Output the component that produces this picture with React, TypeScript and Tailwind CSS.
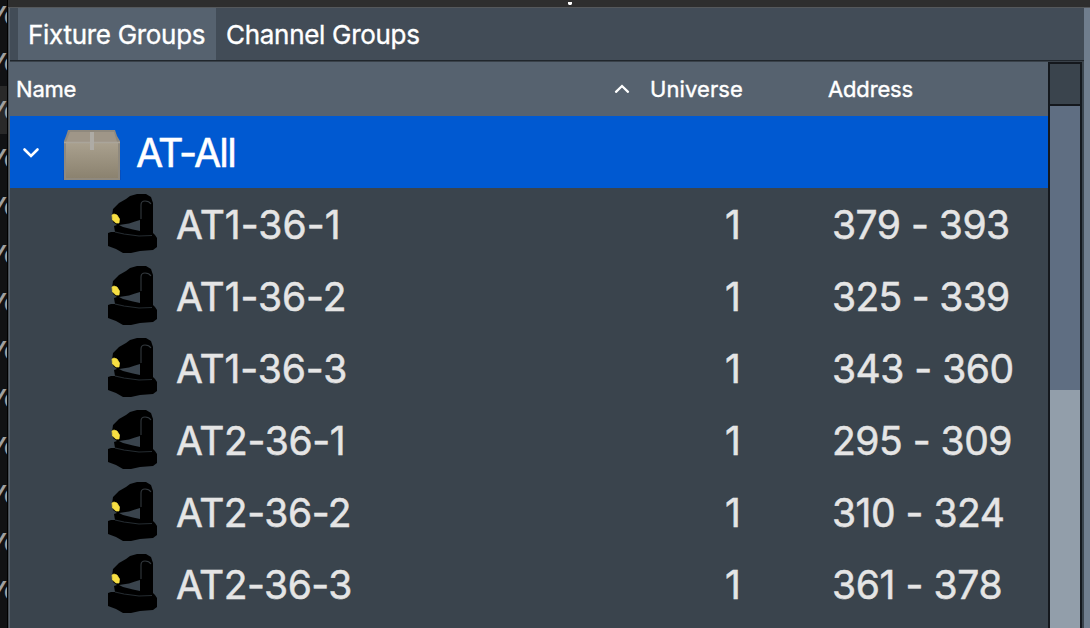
const fixtures = [
  { name: "AT1-36-1", address: "379 - 393", nameSpacing: "tracking-[0.05px]", addressSpacing: "tracking-[-0.5px]" },
  { name: "AT1-36-2", address: "325 - 339", nameSpacing: "tracking-[-0.05px]", addressSpacing: "tracking-[-0.7px]" },
  { name: "AT1-36-3", address: "343 - 360", nameSpacing: "tracking-[-0.1px]", addressSpacing: "tracking-[-0.5px]" },
  { name: "AT2-36-1", address: "295 - 309", nameSpacing: "tracking-[-0.35px]", addressSpacing: "tracking-[-0.5px]" },
  { name: "AT2-36-2", address: "310 - 324", nameSpacing: "tracking-[-0.45px]", addressSpacing: "tracking-[-0.5px]" },
  { name: "AT2-36-3", address: "361 - 378", nameSpacing: "tracking-[-0.5px]", addressSpacing: "tracking-[-0.4px]" },
];

function MovingHead() {
  return (
    <svg className="h-[72px] w-[70px] shrink-0" viewBox="0 0 70 72">
      <path d="M12 28 13 21 19 15 26 11 30 8 37 6H46L51 9 53 15V45L55 47 57 50V59L53 62 40 63 31 65H23L16 61 8 58V45L11 44H15L14 38 17 37 13 34Z" fill="#000" />
      <path d="M19 37 29 35.5 35 33.5 40 32V43L33 41.5 23 39Z" fill="#3a444d" />
      <path d="M41 31V17Q41 13 45 13T51 16" fill="none" stroke="#32383d" strokeWidth="1.1" />
      <path d="M15 44 24 46 39 48 52 47.5" fill="none" stroke="#242b30" strokeWidth="1.2" />
      <path d="M12 27 14 26 17 27 19.5 31 19 35H16L12.500 32Z" fill="#f7df43" stroke="#f7df43" strokeWidth=".7" />
    </svg>
  );
}

function Carton() {
  return (
    <svg className="h-[66px] w-[64px] shrink-0" viewBox="0 0 64 66">
      <defs>
        <linearGradient id="board" x1="0" y1="0" x2="0" y2="1">
          <stop offset="0" stopColor="#a9a08e" />
          <stop offset="1" stopColor="#8b826f" />
        </linearGradient>
      </defs>
      <path d="M3 50H61V60H3Z" fill="#064ebd" />
      <path d="M8 10H55L57 16 60 21V60H4V21L6 16Z" fill="#8f897e" />
      <path d="M10 12H54L57 22H6Z" fill="#9f9688" />
      <path d="M6 23H58V58H6Z" fill="url(#board)" />
      <path d="M4 22.5H60" stroke="#aaa59a" strokeWidth="1.5" />
      <path d="M30 12H34V30H30Z" fill="#aeaba5" />
    </svg>
  );
}

export default function App() {
  return (
    <div className="flex h-[628px] w-[1090px] flex-col overflow-hidden bg-[#3a444d] font-['Inter',sans-serif] text-white">
      <div className="flex min-h-0 flex-1">
        <div className="flex w-[8px] shrink-0 flex-col overflow-hidden border-r border-black bg-[#111214] text-[26px] font-medium text-[#a0a0a0]">
          <div className="h-[86px] shrink-0 overflow-hidden">
            <div className="-ml-[11px] h-[38px] leading-[31px] tracking-[-1px]">Yo</div>
            <div className="-ml-[11px] h-[48px] leading-[50px] tracking-[-1px]">Yo</div>
          </div>
          <div className="h-[48px] shrink-0 bg-[#292929]">
            <div className="-ml-[11px] leading-[50px] tracking-[-1px]">Yo</div>
          </div>
          {Array.from({ length: 10 }, (_, i) => (
            <div key={i} className="-ml-[11px] h-[48px] shrink-0 leading-[50px] tracking-[-1px]">Yo</div>
          ))}
        </div>
        <div className="flex min-w-0 flex-1 flex-col">
          <div className="flex h-[8px] shrink-0 justify-start border-b border-[#55585b] bg-[#2e2e2e] pl-[560px]">
            <svg className="h-[7px] w-[4px]" viewBox="0 0 4 7">
              <path d="M0 2H4V4L3 5H1L0 4Z" fill="#fff" />
            </svg>
          </div>
          <div className="flex min-h-0 flex-1">
            <div className="w-[2px] shrink-0 border-r border-[#59646f] bg-[#454c53]" />
            <div className="flex min-w-0 flex-1 flex-col">
              <div className="flex h-[54px] shrink-0 border-b border-[#394149] bg-[#424c57] pl-[8px] text-[26px] leading-[54px] whitespace-nowrap [-webkit-text-stroke:0.35px_currentColor]">
                <div className="h-[52px] w-[198px] bg-[#56626f] pl-[10px] tracking-[-0.3px]">Fixture Groups</div>
                <div className="h-[52px] pl-[10px] tracking-[-0.3px]">Channel Groups</div>
              </div>
              <div className="-mt-[2px] h-px shrink-0 bg-[#20262c]" />
              <div className="mt-px flex min-h-0 flex-1">
                <div className="flex w-[1038px] shrink-0 flex-col">
                  <div className="flex h-[54px] shrink-0 items-center bg-[#56626f] pl-[6px] text-[22px] leading-[54px] [-webkit-text-stroke:0.4px_currentColor]">
                    <div className="w-[598px] tracking-[-0.2px]">Name</div>
                    <svg className="h-[12px] w-[16px]" viewBox="0 0 16 12">
                      <path d="M2 8.8 8 3 14 8.8" fill="none" stroke="#fff" strokeWidth="2.3" strokeLinecap="round" />
                    </svg>
                    <div className="ml-[20px] w-[178px] tracking-[0.1px]">Universe</div>
                    <div className="tracking-[-0.15px]">Address</div>
                  </div>
                  <div className="flex h-[72px] shrink-0 items-center bg-[#0059d1] pl-[12px]">
                    <svg className="-mt-px h-[14px] w-[18px]" viewBox="0 0 18 14">
                      <path d="M2.5 4.5 9 11 15.500 4.500" fill="none" stroke="#fff" strokeWidth="2.6" strokeLinecap="round" />
                    </svg>
                    <div className="mt-[2px] ml-[20px]"><Carton /></div>
                    <div className="mt-[2px] ml-[12px] text-[39.5px] leading-[70px] tracking-[-1.8px] [-webkit-text-stroke:0.5px_currentColor]">AT-All</div>
                  </div>
                  {fixtures.map((f) => (
                    <div key={f.name} className="flex h-[72px] shrink-0 pl-[90px] text-[39px] leading-[74px] whitespace-nowrap text-[#e5e5e5] [-webkit-text-stroke:0.5px_currentColor]">
                      <MovingHead />
                      <div className={`w-[555px] pl-[6px] ${f.nameSpacing}`}>{f.name}</div>
                      <div className="w-[107px]">1</div>
                      <div className={f.addressSpacing}>{f.address}</div>
                    </div>
                  ))}
                </div>
                <div className="flex w-[34px] shrink-0 flex-col border-x-2 border-t-2 border-[#14181d]">
                  <div className="h-[42px] shrink-0 border-b-2 border-[#14181d] bg-[#3a444d]" />
                  <div className="h-[284px] shrink-0 bg-[#5f6e82]" />
                  <div className="flex-1 bg-[#929eaa]" />
                </div>
              </div>
            </div>
            <div className="w-[6px] shrink-0 bg-[#707e8e]" />
          </div>
        </div>
      </div>
    </div>
  );
}
